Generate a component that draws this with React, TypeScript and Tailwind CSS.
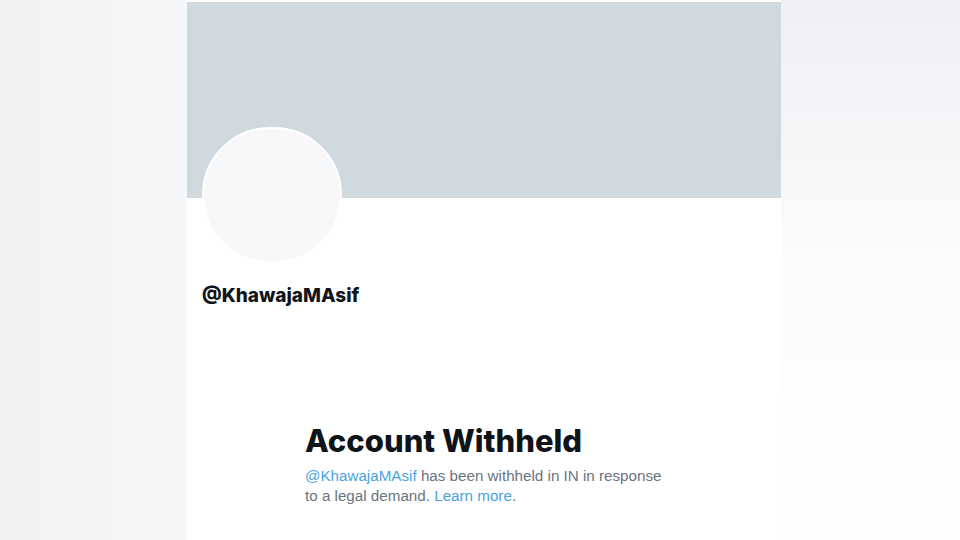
import React from "react";

const font = { fontFamily: '"Liberation Sans", Arial, sans-serif' };
const bold = { fontFamily: 'Inter, "Liberation Sans", Arial, sans-serif' };

export default function App() {
  return (
    <div className="w-[960px] h-[540px] overflow-hidden flex bg-gradient-to-b from-[#f2f4f6] to-[#f9fafb]" style={font}>
      <div className="w-[187px] shrink-0 bg-gradient-to-r from-[#f1f2f4] to-[#f6f7f9]" />
      <div className="w-[594px] shrink-0 bg-white flex flex-col">
        <div className="mt-[2px] h-[196px] bg-[#cfd9de]" />
        <div className="-mt-[71px] ml-[15px] w-[140px] h-[136px] rounded-full bg-[#f7f8f9] border-2 border-white" />
        <div className="mt-[21px] ml-[15px] text-[19px] leading-6 font-extrabold text-[#111418]" style={bold}>
          @KhawajaMAsif
        </div>
        <div className="mt-[115px] ml-[118px] flex flex-col">
          <h1 className="text-[31px] leading-9 font-extrabold text-[#0f1419]" style={bold}>
            Account Withheld
          </h1>
          <p className="mt-[7px] w-[366px] text-[15.2px] leading-5 text-[#6b7480]">
            <span className="text-[#4aa3e0]">@KhawajaMAsif</span> has been withheld in IN in response to a legal demand.{" "}
            <span className="text-[#4aa3e0]">Learn more</span>.
          </p>
        </div>
      </div>
      <div className="flex-1 bg-gradient-to-b from-[#eef0f3] via-[#fcfcfd] to-white" />
    </div>
  );
}
